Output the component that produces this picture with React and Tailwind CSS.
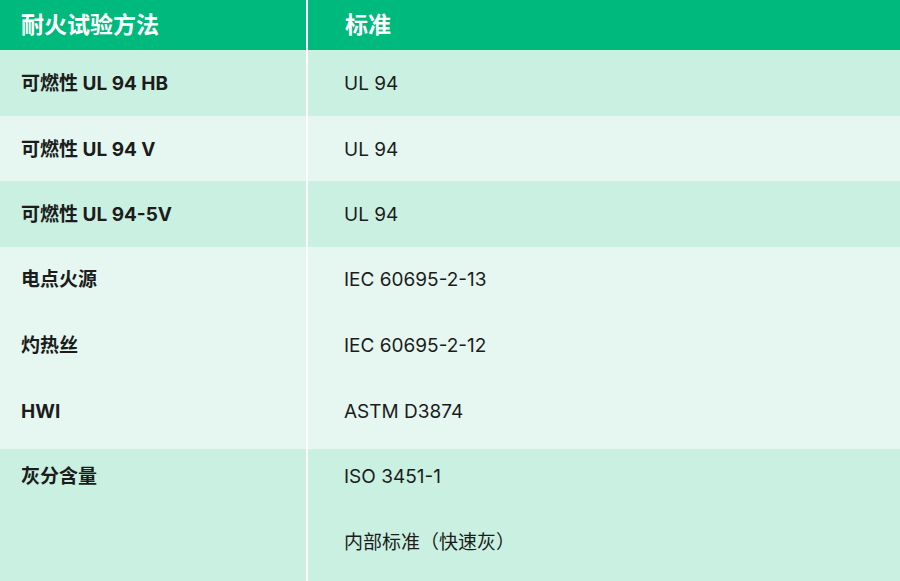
import React from "react";

const rows = [
  { bg: "bg-[#caf0e2]", h: "h-[66px]", shift: "mt-[1px]", lines: [["可燃性 UL 94 HB", "UL 94"]] },
  { bg: "bg-[#e5f7f0]", h: "h-[65px]", shift: "mt-[1px]", lines: [["可燃性 UL 94 V", "UL 94"]] },
  { bg: "bg-[#caf0e2]", h: "h-[66px]", shift: "mt-[1px]", lines: [["可燃性 UL 94-5V", "UL 94"]] },
  {
    bg: "bg-[#e5f7f0]",
    h: "h-[202px]",
    shift: "mt-0",
    lines: [
      ["电点火源", "IEC 60695-2-13"],
      ["灼热丝", "IEC 60695-2-12"],
      ["HWI", "ASTM D3874"],
    ],
  },
  {
    bg: "bg-[#caf0e2]",
    h: "h-[132px]",
    shift: "-mt-[5px]",
    lines: [
      ["灰分含量", "ISO 3451-1"],
      ["", "内部标准（快速灰）"],
    ],
  },
];

const App = () => {
  return (
    <div
      className="w-[900px] h-[581px] overflow-hidden bg-white text-[#1c1c1c]"
      style={{ fontFamily: "Inter, 'Noto Sans CJK SC', sans-serif" }}
    >
      <div className="flex h-[50px] bg-[#00b97c] text-white text-[23px] font-bold">
        <div className="w-[306px] flex items-center pl-[21px]">耐火试验方法</div>
        <div className="flex-1 flex items-center pl-[37px] border-l-2 border-white">标准</div>
      </div>
      {rows.map((row, i) => (
        <div key={i} className={`flex overflow-hidden ${row.h} ${row.bg}`}>
          <div className={`w-[306px] flex flex-col ${row.shift}`}>
            {row.lines.map((l, j) => (
              <div key={j} className="h-[66px] shrink-0 flex items-center pl-[21px] text-[19px] font-bold">
                {l[0]}
              </div>
            ))}
          </div>
          <div className="flex-1 border-l-2 border-white">
            <div className={`flex flex-col ${row.shift}`}>
              {row.lines.map((l, j) => (
                <div key={j} className="h-[66px] shrink-0 flex items-center pl-[36px] text-[19px]">
                  {l[1]}
                </div>
              ))}
            </div>
          </div>
        </div>
      ))}
    </div>
  );
};

export default App;
